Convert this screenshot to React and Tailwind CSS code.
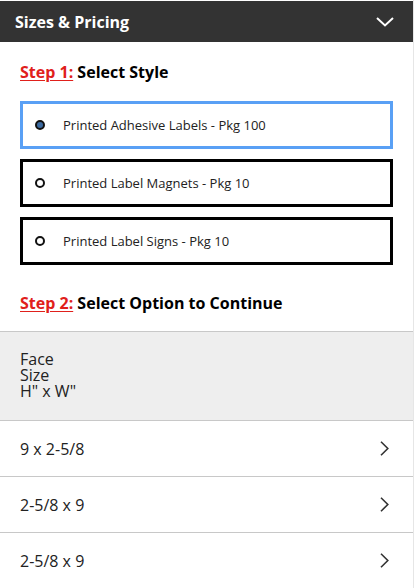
import React from "react";

function Radio({ checked }) {
  return (
    <span
      className={
        "inline-block w-[10px] h-[10px] rounded-full border-2 border-[#111] shrink-0 " +
        (checked ? "bg-[#3b6aa0]" : "bg-white")
      }
    />
  );
}

function Option({ label, selected }) {
  return (
    <div
      className={
        "h-[48px] flex items-center pl-[12px] gap-[18px] border-[3px] " +
        (selected ? "border-[#59a0f5]" : "border-black")
      }
    >
      <Radio checked={selected} />
      <span className="text-[13px] text-[#222]">{label}</span>
    </div>
  );
}

function Row({ label }) {
  return (
    <div className="h-[57px] flex items-center justify-between pl-[20px] pr-[24px] border-t border-[#c8c8c8]">
      <span className="text-[16px] text-[#222]">{label}</span>
      <svg width="9" height="15" viewBox="0 0 9 15" fill="none">
        <path d="M1 0.8 L7.8 7.5 L1 14.2" stroke="#333" strokeWidth="1.6" />
      </svg>
    </div>
  );
}

export default function App() {
  return (
    <div
      className="w-[415px] h-[588px] bg-white overflow-hidden"
      style={{ fontFamily: '"Open Sans", "Noto Sans", sans-serif' }}
    >
      <div className="w-[414px] h-full border-r border-[#e6e6e6] pt-px flex flex-col">
        <div className="h-[42px] bg-[#333333] flex items-center justify-between pl-[15px] pr-[19px]">
          <span className="text-white font-bold text-[16px]">Sizes &amp; Pricing</span>
          <svg width="18" height="10" viewBox="0 0 18 10" fill="none">
            <path d="M1 1 L9 8.5 L17 1" stroke="white" strokeWidth="2" />
          </svg>
        </div>
        <div className="pt-[19px] px-[20px]">
          <div className="text-[16px] font-bold text-black leading-[22px]">
            <span className="text-[#e0201b] underline underline-offset-2">Step 1:</span> Select Style
          </div>
          <div className="mt-[18px] flex flex-col gap-[10px]">
            <Option label="Printed Adhesive Labels - Pkg 100" selected />
            <Option label="Printed Label Magnets - Pkg 10" />
            <Option label="Printed Label Signs - Pkg 10" />
          </div>
          <div className="mt-[27px] text-[16px] font-bold text-black leading-[22px]">
            <span className="text-[#e0201b] underline underline-offset-2">Step 2:</span> Select Option to Continue
          </div>
        </div>
        <div className="mt-[17px] border-t border-[#c8c8c8] bg-[#eeeeee] h-[90px] pl-[20px] pt-[19px] text-[16px] leading-[16px] text-[#222]">
          <div>Face</div>
          <div>Size</div>
          <div>H" x W"</div>
        </div>
        <Row label="9 x 2-5/8" />
        <Row label="2-5/8 x 9" />
        <Row label="2-5/8 x 9" />
      </div>
    </div>
  );
}
